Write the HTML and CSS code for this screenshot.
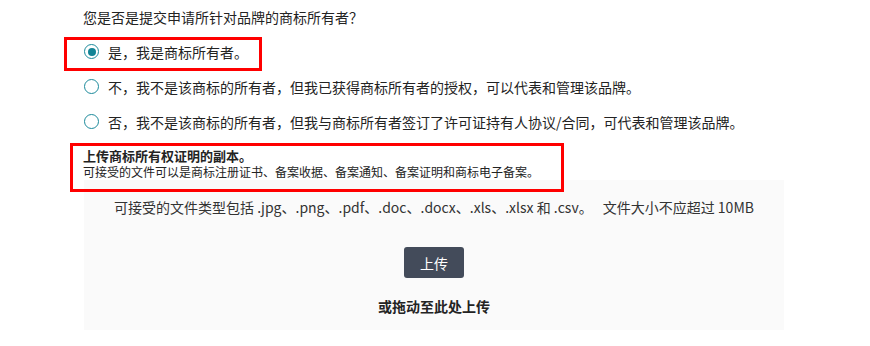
FILE: index.html
```html
<!DOCTYPE html>
<html lang="zh-CN">
<head>
<meta charset="utf-8">
<link rel="stylesheet" href="styles.css">
</head>
<body>
<div class="page">
  <div class="question">您是否是提交申请所针对品牌的商标所有者？</div>
  <div class="options">
    <div class="option"><span class="radio checked"></span><span>是，我是商标所有者。</span></div>
    <div class="option"><span class="radio"></span><span>不，我不是该商标的所有者，但我已获得商标所有者的授权，可以代表和管理该品牌。</span></div>
    <div class="option"><span class="radio"></span><span>否，我不是该商标的所有者，但我与商标所有者签订了许可证持有人协议/合同，可代表和管理该品牌。</span></div>
  </div>
  <div class="upload-head">
    <div class="upload-title">上传商标所有权证明的副本。</div>
    <div class="upload-sub">可接受的文件可以是商标注册证书、备案收据、备案通知、备案证明和商标电子备案。</div>
  </div>
  <div class="dropzone">
    <div class="types"><span>可接受的文件类型包括 .jpg、.png、.pdf、.doc、.docx、.xls、.xlsx 和 .csv。</span><span class="size">文件大小不应超过 10MB</span></div>
    <button class="btn">上传</button>
    <div class="drag">或拖动至此处上传</div>
  </div>
  <div class="mark mark-1"></div>
  <div class="mark mark-2"></div>
</div>
</body>
</html>
```
FILE: styles.css
```css
html, body {
  margin: 0;
  padding: 0;
  background: #ffffff;
}
body {
  font-family: "Noto Sans CJK SC", "Noto Sans", sans-serif;
  color: #232323;
  font-size: 14px;
}
.page {
  position: relative;
  width: 870px;
  height: 346px;
  padding-left: 84px;
  box-sizing: border-box;
}
.question {
  padding-top: 7px;
  margin-left: -1px;
  line-height: 20px;
  height: 20px;
}
.options {
  margin-top: 7px;
  display: flex;
  flex-direction: column;
}
.option {
  height: 35px;
  display: flex;
  align-items: center;
  gap: 9px;
  line-height: 20px;
}
.radio {
  width: 15px;
  height: 15px;
  box-sizing: border-box;
  border: 1.5px solid #1c8a9b;
  border-radius: 50%;
  display: flex;
  align-items: center;
  justify-content: center;
  flex: none;
}
.radio.checked::after {
  content: "";
  width: 8px;
  height: 8px;
  border-radius: 50%;
  background: #138496;
}
.upload-head {
  margin-top: 9px;
  margin-left: -1px;
}
.upload-title {
  font-size: 13px;
  font-weight: bold;
  line-height: 16px;
}
.upload-sub {
  font-size: 12px;
  line-height: 15px;
}
.dropzone {
  margin-top: 1px;
  width: 700px;
  height: 150px;
  box-sizing: border-box;
  background: #fafafa;
  padding-top: 17px;
  display: flex;
  flex-direction: column;
  align-items: center;
}
.types {
  line-height: 20px;
  font-size: 14px;
  color: #333;
}
.size {
  margin-left: 10px;
}
.btn {
  margin-top: 30px;
  width: 60px;
  height: 31px;
  border: none;
  border-radius: 3px;
  background: #434b5a;
  color: #ffffff;
  font-family: inherit;
  font-size: 14px;
  padding: 0;
}
.drag {
  margin-top: 18px;
  line-height: 20px;
  font-weight: bold;
  font-size: 14px;
}
.mark {
  position: absolute;
  border: 3px solid #ff0000;
  box-sizing: border-box;
  pointer-events: none;
}
.mark-1 {
  left: 64px;
  top: 37px;
  width: 198px;
  height: 34px;
}
.mark-2 {
  left: 70px;
  top: 143px;
  width: 494px;
  height: 49px;
}
```
